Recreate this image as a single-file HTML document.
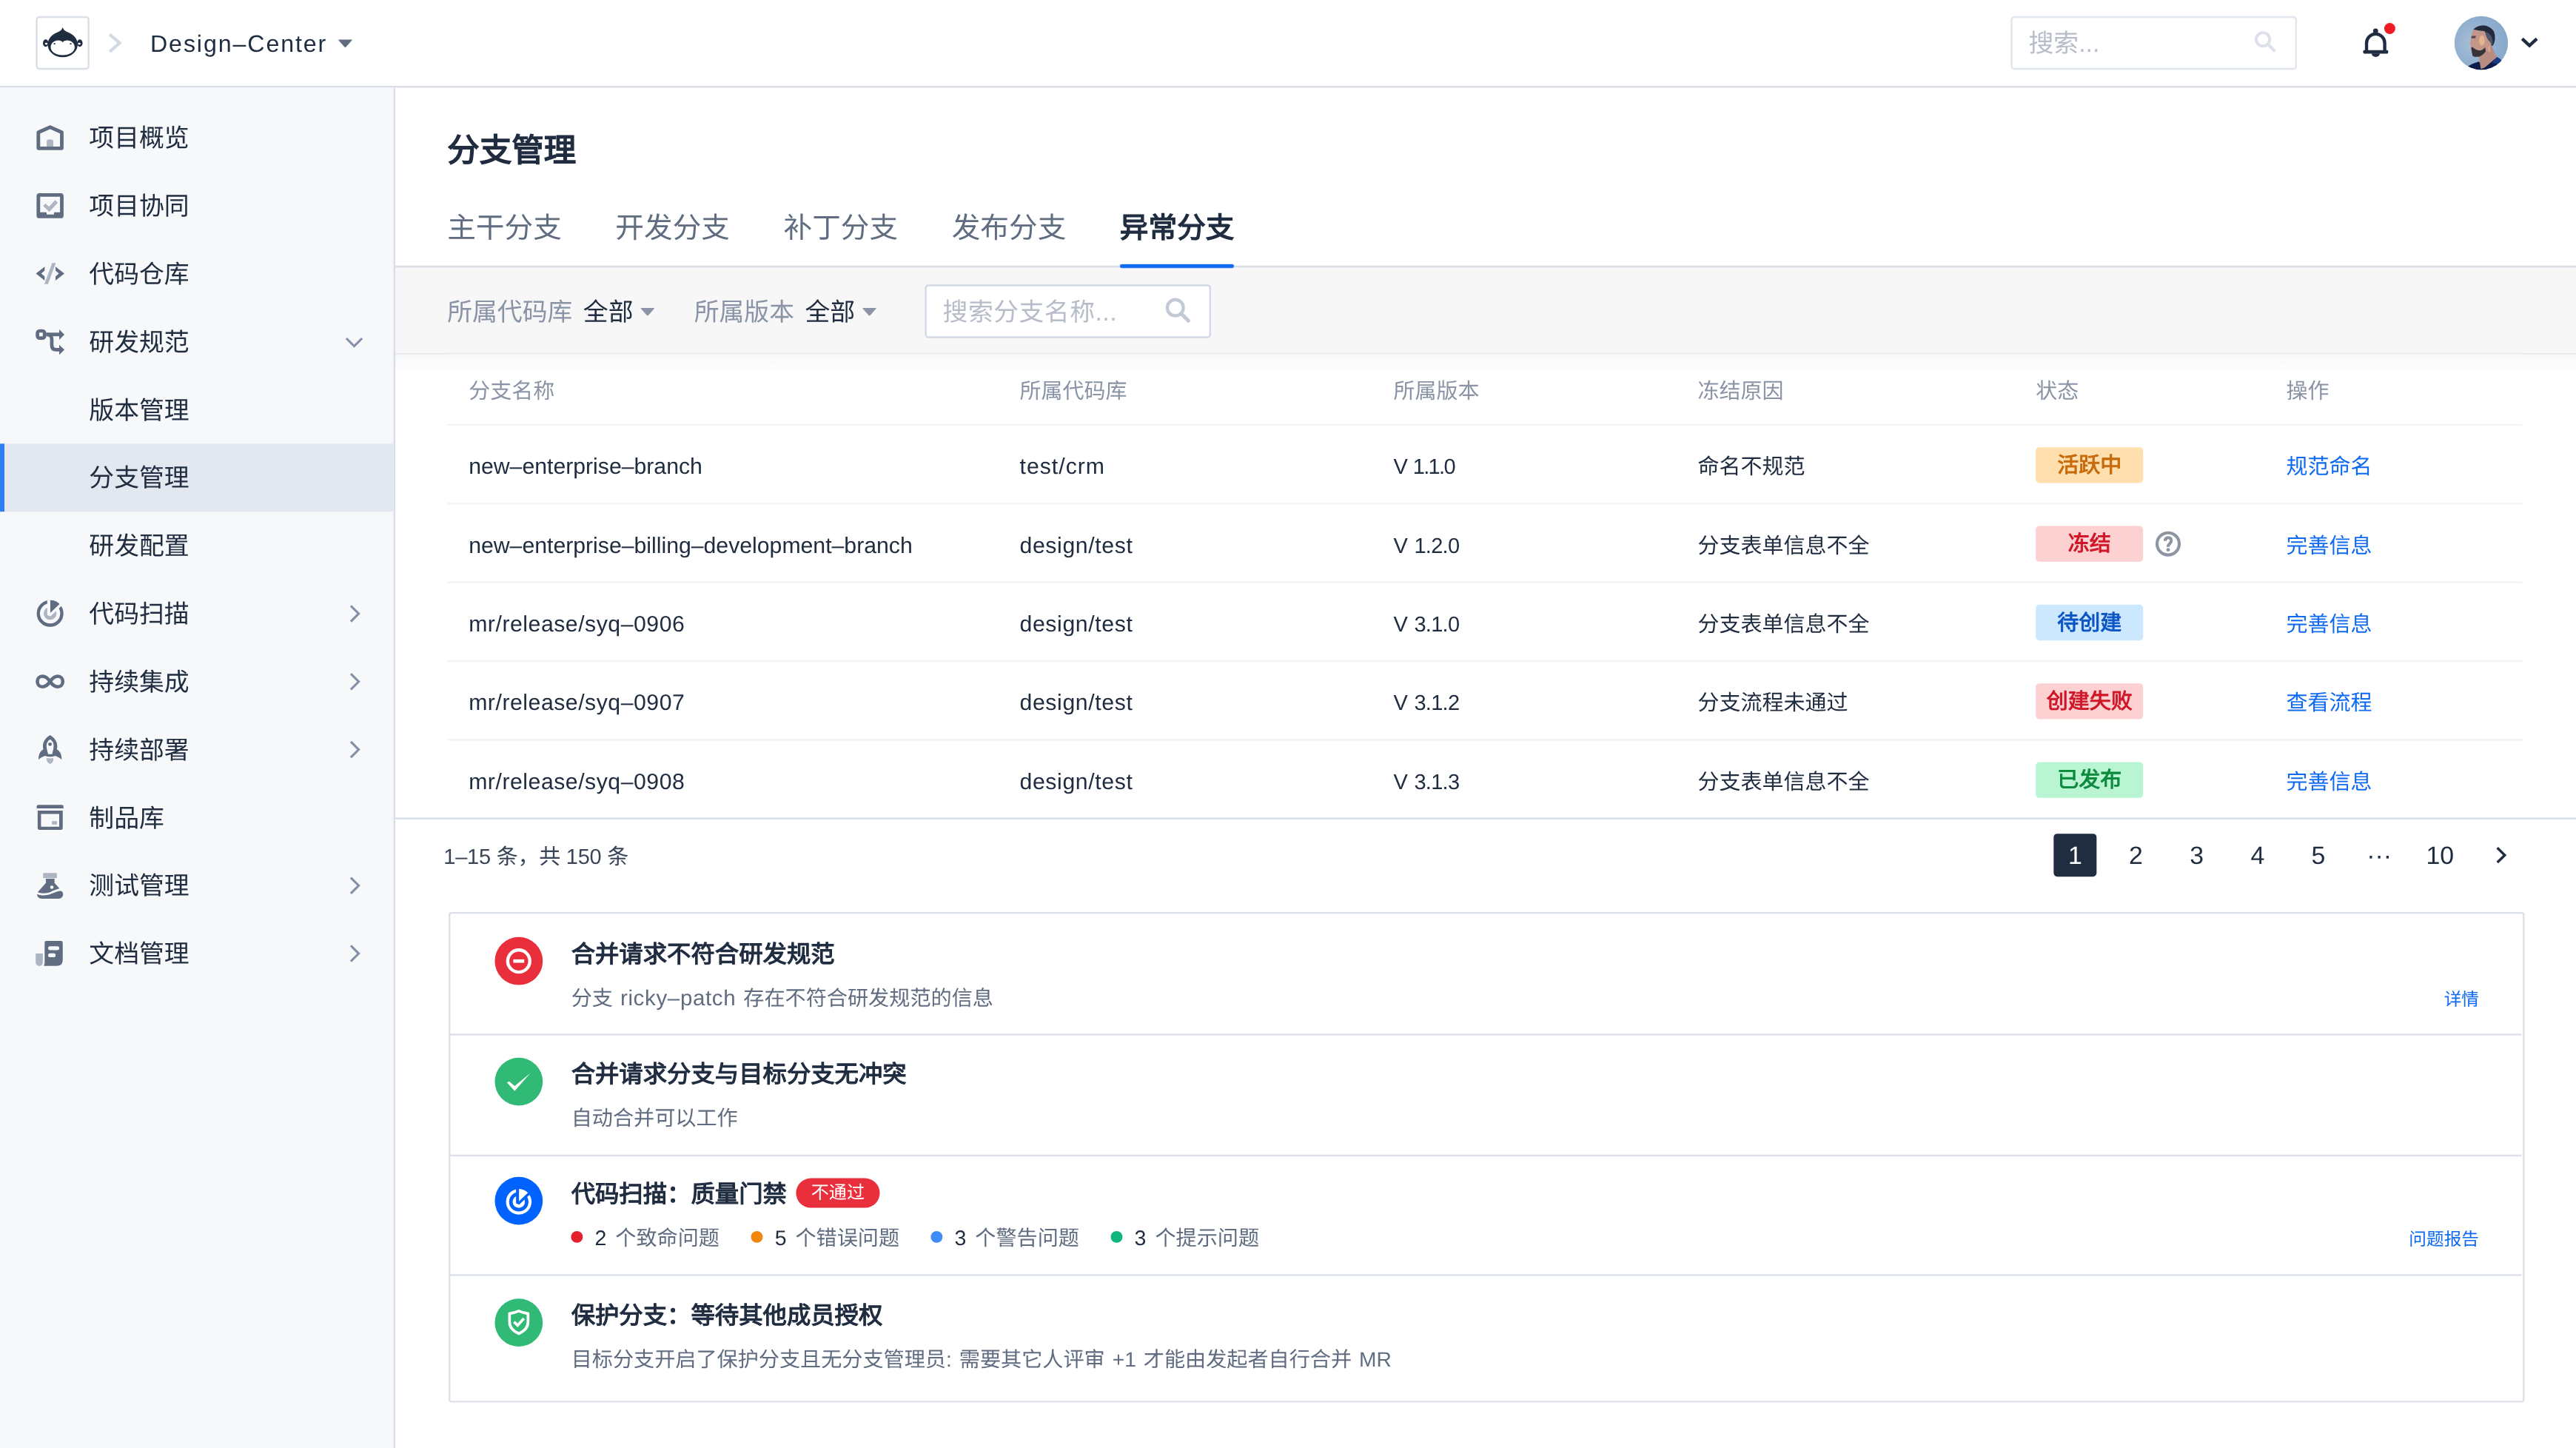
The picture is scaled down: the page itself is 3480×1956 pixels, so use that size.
<!DOCTYPE html>
<html lang="zh-CN">
<head>
<meta charset="utf-8">
<title>分支管理</title>
<style>
*{box-sizing:border-box;margin:0;padding:0}
html,body{width:3480px;height:1956px;overflow:hidden;background:#fff}
body{font-family:"Liberation Sans",sans-serif;color:#202d40;-webkit-font-smoothing:antialiased;text-rendering:geometricPrecision}
#stage{position:absolute;left:0;top:0;width:1440px;height:810px;transform:scale(2.4166667);transform-origin:0 0;overflow:hidden;will-change:transform}
.abs{position:absolute}
svg{display:block;overflow:visible}
/* header */
#hdr{position:absolute;left:0;top:0;width:1440px;height:49px;background:#fff;border-bottom:1px solid #d9dee7}
#logo{position:absolute;left:20px;top:9px;width:30px;height:30px;border:1px solid #d9dee7;border-radius:2px;background:#fff}
#proj{position:absolute;left:84px;top:0;height:48px;line-height:48px;font-size:14px;color:#202d40;white-space:nowrap}
#hsearch{position:absolute;left:1124px;top:9px;width:160px;height:30px;border:1px solid #e1e5ec;border-radius:2px;background:#fff}
#hsearch span{position:absolute;left:9px;top:0;line-height:28px;font-size:14px;color:#b7bdc8;white-space:nowrap}
/* sidebar */
#side{position:absolute;left:0;top:49px;width:221px;height:761px;background:#f7f8fa;border-right:1px solid #d9dee7;padding-top:9px}
.it{position:relative;height:38px;line-height:39.2px;font-size:14px;color:#202d40;padding-left:49.8px;white-space:nowrap}
.it svg.ic{position:absolute;left:20px;top:11px;width:16px;height:16px}
.it svg.ch{position:absolute;left:192px;top:13px;width:12px;height:12px}
.it.on{background:linear-gradient(90deg,#2f7fee 2.3px,#e3e7f0 2.3px)}

/* main */
#title{position:absolute;left:250px;top:64.15px;font-size:18px;-webkit-text-stroke:0.7px #202d40;line-height:40px;color:#202d40;white-space:nowrap}
.tab{position:absolute;top:108.75px;height:40px;line-height:40px;font-size:16px;color:#606c80;white-space:nowrap}
.tab.on{color:#202d40;-webkit-text-stroke:0.6px #202d40}
#fbar{position:absolute;left:221px;top:149px;width:1219px;height:49px;background:#f7f7f8}
#fshadow{z-index:2;position:absolute;left:221px;top:198px;width:1219px;height:10px;background:linear-gradient(rgba(32,45,64,0.035),rgba(32,45,64,0))}
.fl{position:absolute;top:150.2px;height:48px;line-height:49px;font-size:14px;white-space:nowrap}
.fl.k{color:#8a94a6}.fl.v{color:#202d40}
#fsearch{position:absolute;left:517px;top:158.5px;width:160px;height:30px;border:1px solid #d3d9e4;border-radius:2px;background:#fff}
#fsearch span{position:absolute;left:9px;top:0;line-height:29px;font-size:14px;color:#b7bdc8;white-space:nowrap;letter-spacing:0.2px}
/* table */
#tbl{position:absolute;left:250px;top:198px;width:1160px;background:#fff}
.tr{position:relative;height:44px;border-bottom:1px solid #f1f3f8}
.tr.h{height:40px;color:#8a94a6}
.tr.last{border-bottom:none}
.td{position:absolute;top:0;height:100%;font-size:12px;white-space:nowrap}
.tr .td{line-height:46px}.tr.h .td{line-height:41px;transform:translateY(0.6px)}
.c1{left:12px}.c2{left:320px}.c3{left:529px}.c4{left:699px}.c5{left:888px}.c6{left:1028px}
.c6 a,.lnk{color:#0f6af2;text-decoration:none}
.bd{position:absolute;left:888px;top:12px;width:60px;height:20px;border-radius:2px;font-size:12px;-webkit-text-stroke:0.4px;line-height:21.6px;text-align:center}
.b-or{background:#ffdfae;color:#c66a0c}.b-rd{background:#fdd0d1;color:#cf1627}.b-bl{background:#cce8fe;color:#0b55c4}.b-gr{background:#b9f5d2;color:#0c8a3e}
#tblend{position:absolute;left:221px;top:457px;width:1219px;height:1px;background:#d9dee7}
/* pagination */
#pinfo{position:absolute;left:248px;top:467px;line-height:24px;font-size:12px;color:#3a4558;white-space:nowrap}
.pg{position:absolute;top:466px;width:24px;height:24px;line-height:24.6px;text-align:center;font-size:14px;color:#202d40;border-radius:2px}
.pg.on{background:#202d40;color:#fff}

/* card */
.ct{position:absolute;left:319.3px;font-size:13.4px;-webkit-text-stroke:0.5px #202d40;line-height:20px;color:#202d40;white-space:nowrap}
.cs{position:absolute;left:319.3px;font-size:11.65px;line-height:18px;color:#606c80;white-space:nowrap}
.cl{position:absolute;font-size:9.8px;line-height:14px;color:#0f6af2;white-space:nowrap;text-align:right;right:54.2px}
.pill{position:absolute;left:445px;top:658.6px;width:46.8px;height:16.5px;color:#fff;font-size:10px;line-height:17px;text-align:center}
.num{position:absolute;top:682.6px;font-size:11.8px;line-height:18px;color:#202d40;white-space:nowrap}
.cs.q{top:684.05px}
.la{font-size:12.2px;letter-spacing:0.28px}
.cs{word-spacing:0.9px}

.tr .c1,.tr .c2,.tr .c3{font-size:12.5px}
.tr.h .c1,.tr.h .c2,.tr.h .c3{font-size:12px}
.n2,.n3,.n4{letter-spacing:0.22px}
.r0{letter-spacing:0.42px}.r1,.r2,.r3,.r4{letter-spacing:0.26px}
.tr .c3{font-size:12px;word-spacing:0.8px}.v0{letter-spacing:-0.675px}.v1,.v2,.v3,.v4{letter-spacing:-0.3px}
#proj{font-size:13.3px;letter-spacing:0.79px;top:1px}
#pinfo{letter-spacing:-0.1px}
</style>
</head>
<body>
<div id="stage">

<div id="hdr">
  <div id="logo">
    <svg width="28" height="28" viewBox="1 1 28 28">
      <ellipse cx="5.55" cy="15.1" rx="1.55" ry="2.05" fill="#202d40"/><ellipse cx="5.85" cy="15.45" rx="0.75" ry="0.6" fill="#fff"/>
      <ellipse cx="24.6" cy="15.1" rx="1.55" ry="2.05" fill="#202d40"/><ellipse cx="24.3" cy="15.45" rx="0.75" ry="0.6" fill="#fff"/>
      <path d="M15.06 6.2 C15.4 7.6 16.3 8.3 17.6 8.9 C21 10 23.4 12.6 23.4 15.9 C23.4 19.8 19.7 23 15.06 23 C10.4 23 6.7 19.8 6.7 15.9 C6.7 12.6 9.1 10 12.5 8.9 C13.8 8.3 14.7 7.6 15.06 6.2 Z" fill="#202d40"/>
      <path d="M15.06 14.6 C16.2 13.4 18 13.4 19.2 13.9 C20.9 14.6 21.75 16 21.75 17.5 C21.75 19.9 18.8 21.85 15.06 21.85 C11.3 21.85 8.35 19.9 8.35 17.5 C8.35 16 9.2 14.6 10.9 13.9 C12.1 13.4 13.9 13.4 15.06 14.6 Z" fill="#fff"/>
      <ellipse cx="10.5" cy="15.45" rx="0.58" ry="0.38" fill="#202d40"/><ellipse cx="19.5" cy="15.45" rx="0.58" ry="0.38" fill="#202d40"/>
    </svg>
  </div>
  <svg class="abs" style="left:59px;top:17px" width="12" height="14" viewBox="0 0 12 14"><path d="M2.3 2.2 L7.9 7.05 L2.3 11.9" fill="none" stroke="#d3d9e3" stroke-width="1.7"/></svg>
  <div id="proj">Design–Center</div>
  <svg class="abs" style="left:189px;top:21.6px" width="8" height="5" viewBox="0 0 8 5"><path d="M0.5 0.1 H7.5 Q8 0.1 7.7 0.5 L4.4 4.3 Q4 4.7 3.6 4.3 L0.3 0.5 Q0 0.1 0.5 0.1Z" fill="#606c80"/></svg>
  <div id="hsearch"><span>搜索...</span>
    <svg class="abs" style="left:134.9px;top:7.4px" width="12.5" height="12.5" viewBox="0 0 13 13"><circle cx="5.2" cy="5.2" r="3.9" fill="none" stroke="#dce1ea" stroke-width="1.7"/><path d="M8.2 8.2 L11.6 11.6" stroke="#dce1ea" stroke-width="1.9" stroke-linecap="round"/></svg>
  </div>
  <svg class="abs" style="left:1320px;top:16px" width="16" height="16" viewBox="0 0 16 16">
    <circle cx="7.98" cy="1.36" r="1.41" fill="#202d40"/>
    <path d="M2.91 12.6 V8.08 A5.08 5.08 0 0 1 13.07 8.08 V12.6" fill="none" stroke="#202d40" stroke-width="1.8"/>
    <rect x="1.03" y="12.04" width="13.97" height="1.93" rx="0.6" fill="#202d40"/>
    <path d="M5.74 13.9 A2.31 1.92 0 0 0 10.37 13.9 Z" fill="#202d40"/>
  </svg>
  <svg class="abs" style="left:1330px;top:10px" width="12" height="12" viewBox="0 0 12 12"><circle cx="5.9" cy="5.9" r="3.1" fill="#ee1c24"/></svg>
  <svg class="abs" style="left:1372px;top:9px" width="30" height="30" viewBox="0 0 30 30">
    <defs><radialGradient id="avg" cx="0.36" cy="0.5" r="0.62"><stop offset="0" stop-color="#a9c0d9"/><stop offset="0.55" stop-color="#94b1d0"/><stop offset="1" stop-color="#88a9cc"/></radialGradient><clipPath id="avc"><circle cx="15" cy="15" r="15"/></clipPath><filter id="avb" x="-10%" y="-10%" width="120%" height="120%"><feGaussianBlur stdDeviation="0.32"/></filter></defs>
    <g clip-path="url(#avc)">
      <rect width="30" height="30" fill="url(#avg)"/>
      <g filter="url(#avb)">
      <path d="M7.6 28 Q10.5 26.2 13.6 25.4 L17 27.5 L23.7 22.9 Q25.4 23.6 26.4 24.8 L27 32 H7 Z" fill="#0f1f48"/>
      <path d="M23.7 22.9 Q25.4 23.6 26.4 24.8 L24.5 27 L21 26 Z" fill="#173a82"/>
      <path d="M13.6 21 L20.6 15.6 Q22.4 20.6 23.8 23 L17.6 28.2 Q16 29.6 14.7 29.3 Z" fill="#b98c82"/>
      <path d="M10.7 7.6 Q9.6 9.6 9.5 11.5 L8.7 15.6 Q8.9 16.4 9.5 17 L9.3 18.2 L10.2 22 Q11.2 22.9 14 22.6 L17.6 20 L20.8 16 L19.2 11 L16.8 8 Z" fill="#c3968a"/>
      <ellipse cx="15.4" cy="13.6" rx="1.6" ry="2.8" fill="#ecbb8e" opacity="0.8"/>
      <ellipse cx="19.5" cy="18.4" rx="0.6" ry="1.9" fill="#e6b592" opacity="0.7"/>
      <path d="M9.5 11.2 L12 11 L11.8 12.3 L9.6 12.4 Z" fill="#5a464a"/>
      <path d="M9.4 17.4 Q10.4 17.2 11 18 Q12.4 19.4 14.4 19.2 Q16 19 17.2 17.4 L17.6 19.8 Q16 21.8 14 22.7 Q11.4 23 10.3 22.3 Q9.6 20.4 9.4 17.4 Z" fill="#2c2a34" opacity="0.92"/>
      <path d="M10.6 7.4 Q12.6 5.4 16.3 5.2 Q20 5.6 22 8.4 Q23 10.6 22.7 13 Q22.4 15 21.6 16.4 L20.8 16.6 Q20.6 14.6 19.3 13.8 Q18.4 12.4 17.8 11 Q17.4 9 16.8 8.4 Q13.6 8.2 10.6 7.4 Z" fill="#222a3b"/>
      <path d="M17.2 8.6 Q19.4 9.4 20.6 11.2 Q21.6 13 21.4 15.6 L20.8 16.4 Q20.6 14.6 19.3 13.8 Q18.2 12 17.8 10.6 Z" fill="#4d586c"/>
      </g>
    </g>
  </svg>
  <svg class="abs" style="left:1408px;top:19px" width="12" height="10" viewBox="0 0 12 10"><path d="M1.9 2.7 L6 6.5 L10.1 2.7" fill="none" stroke="#202d40" stroke-width="1.8"/></svg>
</div>

<div id="side">
  <div class="it"><svg class="ic" viewBox="0 0 16 16"><path d="M1.45 4.95 L8 2.05 L14.55 4.95 V13.9 H1.45 Z" fill="none" stroke="#606c80" stroke-width="2" stroke-linejoin="round"/><path d="M6.1 12.9 V10 Q6.1 9 7.1 9 H8.8 Q9.8 9 9.8 10 V12.9 Z" fill="#aeb5c2"/></svg>项目概览</div>
  <div class="it"><svg class="ic" viewBox="0 0 16 16"><rect x="1.45" y="2" width="13.1" height="12" rx="0.6" fill="none" stroke="#606c80" stroke-width="2"/><path d="M1 11.7 H5.6 Q6.07 11.7 6.07 12.2 V12.9 H10.18 V12.2 Q10.18 11.7 10.65 11.7 H15 V14.6 H1 Z" fill="#606c80"/><path d="M4.75 7.45 L7.5 10 L11.6 5.55" fill="none" stroke="#aeb5c2" stroke-width="2"/></svg>项目协同</div>
  <div class="it"><svg class="ic" viewBox="0 0 16 16"><path d="M0.07 7.9 L4.96 4.1 V6.24 L3.07 7.9 L4.96 9.5 V11.81 Z" fill="#606c80"/><path d="M16 7.9 L11.04 4.1 V6.24 L12.93 7.9 L11.04 9.5 V11.81 Z" fill="#606c80"/><path d="M9.16 1.95 H11.21 L6.84 13.84 H4.78 Z" fill="#aeb5c2"/></svg>代码仓库</div>
  <div class="it"><svg class="ic" viewBox="0 0 16 16"><rect x="0.94" y="1.96" width="3.98" height="3.98" rx="1.2" fill="none" stroke="#606c80" stroke-width="1.95"/><path d="M5.8 3.94 H13.3" stroke="#606c80" stroke-width="2"/><path d="M6.3 3.94 C8.3 3.94 8.94 5 8.94 6.6 V9.9 C8.94 11.6 9.9 12.44 11.4 12.44 H13.3" fill="none" stroke="#606c80" stroke-width="1.97"/><path d="M13.1 1.11 L16 4 L13.1 6.88 Z" fill="#606c80"/><path d="M13.1 9.74 L16 12.5 L13.1 15.31 Z" fill="#606c80"/></svg>研发规范<svg class="ch" viewBox="0 0 12 12"><path d="M1.6 4.1 L6 8.5 L10.4 4.1" fill="none" stroke="#8491a8" stroke-width="1.3"/></svg></div>
  <div class="it">版本管理</div>
  <div class="it on">分支管理</div>
  <div class="it">研发配置</div>
  <div class="it"><svg class="ic" viewBox="0 0 16 16"><g transform="translate(8 7.9)"><circle r="6.56" fill="none" stroke="#606c80" stroke-width="1.8"/><circle r="3.6" fill="#aeb5c2"/><path d="M0 0.4 L0 -7.46 A7.46 7.46 0 0 1 5.9 -4.56 Z" fill="#606c80"/><path d="M-0.74 -8.2 V0.4" stroke="#f7f8fa" stroke-width="1.71" stroke-linecap="round" fill="none"/><path d="M0.05 0.78 L6.2 -5.1" stroke="#f7f8fa" stroke-width="1.5" stroke-linecap="round" fill="none"/></g></svg>代码扫描<svg class="ch" viewBox="0 0 12 12"><path d="M4.1 1.6 L8.5 6 L4.1 10.4" fill="none" stroke="#8491a8" stroke-width="1.3"/></svg></div>
  <div class="it"><svg class="ic" viewBox="0 0 16 16"><path d="M8 7.95 C6.4 5.6 4.8 5 3.7 5 C2.1 5 0.9 6.3 0.9 7.95 C0.9 9.6 2.1 10.9 3.7 10.9 C4.8 10.9 6.4 10.3 8 7.95 C9.6 5.6 11.2 5 12.3 5 C13.9 5 15.1 6.3 15.1 7.95 C15.1 9.6 13.9 10.9 12.3 10.9 C11.2 10.9 9.6 10.3 8 7.95 Z" fill="none" stroke="#606c80" stroke-width="1.9"/></svg>持续集成<svg class="ch" viewBox="0 0 12 12"><path d="M4.1 1.6 L8.5 6 L4.1 10.4" fill="none" stroke="#8491a8" stroke-width="1.3"/></svg></div>
  <div class="it"><svg class="ic" viewBox="0 0 16 16"><path d="M8 -0.15 C10.6 1.4 12 3.6 12 6 C12 6.8 11.9 7.4 11.75 7.9 C13.6 8.9 14.5 10.8 14.47 13.5 C13.2 12.6 12.2 12 10.9 11.5 C9 12.2 7 12.2 5.1 11.5 C3.8 12 2.8 12.6 1.53 13.5 C1.5 10.8 2.4 8.9 4.25 7.9 C4.1 7.4 4 6.8 4 6 C4 3.6 5.4 1.4 8 -0.15 Z" fill="#606c80"/><path d="M8 2.25 C9.4 3.2 10 4.4 10 5.6 C10 7 9.7 8.6 9.15 10.55 H6.95 C6.3 8.6 6 7 6 5.6 C6 4.4 6.6 3.2 8 2.25 Z" fill="#f7f8fa"/><circle cx="7.97" cy="5" r="1" fill="#606c80"/><path d="M6.07 12.7 Q8 13.1 9.84 12.7 V13.6 C9.84 14.8 9 15.7 8 16.05 C7 15.7 6.07 14.8 6.07 13.6 Z" fill="#aeb5c2"/></svg>持续部署<svg class="ch" viewBox="0 0 12 12"><path d="M4.1 1.6 L8.5 6 L4.1 10.4" fill="none" stroke="#8491a8" stroke-width="1.3"/></svg></div>
  <div class="it"><svg class="ic" viewBox="0 0 16 16"><path d="M0.53 2.86 V1.8 Q0.53 0.94 1.4 0.94 H14.6 Q15.5 0.94 15.5 1.8 V2.86 Z" fill="#606c80"/><path fill-rule="evenodd" d="M1.05 4.06 H15.07 V13.9 Q15.07 14.87 14.1 14.87 H2 Q1.05 14.87 1.05 13.9 Z M2.93 5.98 V13.07 H13.1 V5.98 Z" fill="#606c80"/><rect x="9.04" y="9.98" width="2.83" height="1.92" fill="#aeb5c2"/></svg>制品库</div>
  <div class="it"><svg class="ic" viewBox="0 0 16 16"><rect x="4.1" y="0.96" width="7.71" height="2.92" rx="0.4" fill="#aeb5c2"/><path d="M5.64 4.13 H10.48 V6.53 L13.27 9.7 C11.5 10.1 10 10.8 8.4 11.5 C5.8 12.6 3 12.5 1.05 11.75 L5.64 6.53 Z" fill="#606c80"/><path d="M0.67 12.88 C2.5 13.6 5.5 13.9 8.5 12.7 C10.5 11.9 12 11.2 13.6 11 C14.8 10.9 15.3 12 15.25 13 C15.2 14.4 14.2 15.36 12.84 15.36 H3.4 C1.8 15.36 0.8 14.2 0.67 12.88 Z" fill="#606c80"/><circle cx="8.98" cy="8.97" r="0.94" fill="#f7f8fa"/></svg>测试管理<svg class="ch" viewBox="0 0 12 12"><path d="M4.1 1.6 L8.5 6 L4.1 10.4" fill="none" stroke="#8491a8" stroke-width="1.3"/></svg></div>
  <div class="it"><svg class="ic" viewBox="0 0 16 16"><path d="M5.9 0.94 H14.1 Q15.07 0.94 15.07 1.9 V11.6 Q15.07 14.92 11.7 14.92 H4.44 Q4.96 14.2 4.96 12.8 V1.9 Q4.96 0.94 5.9 0.94 Z" fill="#606c80"/><rect x="6.89" y="3.89" width="6.26" height="2.2" rx="1.1" fill="#f7f8fa"/><rect x="6.89" y="7.89" width="4.2" height="2.19" rx="1.1" fill="#f7f8fa"/><path d="M-0.07 7.97 H3.96 V12.95 A2.015 2.015 0 0 1 -0.07 12.95 Z" fill="#aeb5c2"/></svg>文档管理<svg class="ch" viewBox="0 0 12 12"><path d="M4.1 1.6 L8.5 6 L4.1 10.4" fill="none" stroke="#8491a8" stroke-width="1.3"/></svg></div>
</div>

<div id="main">
<div id="title">分支管理</div>
<div class="tab" style="left:250px">主干分支</div>
<div class="tab" style="left:344px">开发分支</div>
<div class="tab" style="left:438px">补丁分支</div>
<div class="tab" style="left:532px">发布分支</div>
<div class="tab on" style="left:626px">异常分支</div>
<div id="fbar"></div><div id="fshadow"></div>
<svg class="abs" style="left:221px;top:196px" width="1219" height="3" viewBox="0 0 1219 3"><rect x="0" y="1.5" width="1219" height="0.5" fill="#dde1e8"/></svg>
<svg class="abs" style="left:221px;top:146px" width="1219" height="5" viewBox="0 0 1219 5"><rect x="0" y="2.4" width="1219" height="1.05" fill="#d9dee7"/><rect x="405" y="1.7" width="63.8" height="2.1" rx="1" fill="#1269f3"/></svg>
<div class="fl k" style="left:250px">所属代码库</div><div class="fl v" style="left:326px">全部</div><svg class="abs" style="left:358px;top:171.9px" width="8" height="5" viewBox="0 0 8 5"><path d="M0.5 0.1 H7.5 Q8 0.1 7.7 0.5 L4.4 4.3 Q4 4.7 3.6 4.3 L0.3 0.5 Q0 0.1 0.5 0.1Z" fill="#8a94a6"/></svg>
<div class="fl k" style="left:388px">所属版本</div><div class="fl v" style="left:450px">全部</div><svg class="abs" style="left:482px;top:171.9px" width="8" height="5" viewBox="0 0 8 5"><path d="M0.5 0.1 H7.5 Q8 0.1 7.7 0.5 L4.4 4.3 Q4 4.7 3.6 4.3 L0.3 0.5 Q0 0.1 0.5 0.1Z" fill="#8a94a6"/></svg>
<div id="fsearch"><span>搜索分支名称...</span><svg class="abs" style="left:132.75px;top:6.2px" width="15" height="15" viewBox="0 0 15 15"><circle cx="6" cy="6" r="4.5" fill="none" stroke="#c3cad6" stroke-width="1.8"/><path d="M9.4 9.4 L13.3 13.3" stroke="#c3cad6" stroke-width="2.1" stroke-linecap="round"/></svg></div>
<div id="tbl">
  <div class="tr h"><div class="td c1">分支名称</div><div class="td c2">所属代码库</div><div class="td c3">所属版本</div><div class="td c4">冻结原因</div><div class="td c5">状态</div><div class="td c6">操作</div></div>
  <div class="tr"><div class="td c1 n0">new–enterprise–branch</div><div class="td c2 r0">test/crm</div><div class="td c3 v0">V 1.1.0</div><div class="td c4">命名不规范</div><div class="bd b-or">活跃中</div><div class="td c6"><a>规范命名</a></div></div>
  <div class="tr"><div class="td c1 n1">new–enterprise–billing–development–branch</div><div class="td c2 r1">design/test</div><div class="td c3 v1">V 1.2.0</div><div class="td c4">分支表单信息不全</div><div class="bd b-rd">冻结</div><svg class="abs" style="left:955px;top:15.2px" width="14" height="14" viewBox="0 0 14 14"><circle cx="7" cy="7" r="6.2" fill="none" stroke="#8d95a3" stroke-width="1.7"/><path d="M5.3 5.4 Q5.3 3.5 7 3.5 Q8.75 3.5 8.75 5.2 Q8.75 6.2 7.8 6.95 Q7 7.6 7 8.7" fill="none" stroke="#8d95a3" stroke-width="1.7"/><circle cx="7" cy="10.3" r="1" fill="#8d95a3"/></svg><div class="td c6"><a>完善信息</a></div></div>
  <div class="tr"><div class="td c1 n2">mr/release/syq–0906</div><div class="td c2 r2">design/test</div><div class="td c3 v2">V 3.1.0</div><div class="td c4">分支表单信息不全</div><div class="bd b-bl">待创建</div><div class="td c6"><a>完善信息</a></div></div>
  <div class="tr"><div class="td c1 n3">mr/release/syq–0907</div><div class="td c2 r3">design/test</div><div class="td c3 v3">V 3.1.2</div><div class="td c4">分支流程未通过</div><div class="bd b-rd">创建失败</div><div class="td c6"><a>查看流程</a></div></div>
  <div class="tr last"><div class="td c1 n4">mr/release/syq–0908</div><div class="td c2 r4">design/test</div><div class="td c3 v4">V 3.1.3</div><div class="td c4">分支表单信息不全</div><div class="bd b-gr">已发布</div><div class="td c6"><a>完善信息</a></div></div>
</div>
<div id="tblend"></div>
<div id="pinfo">1–15 条，共 150 条</div>
<div class="pg on" style="left:1148px">1</div>
<div class="pg" style="left:1182px">2</div>
<div class="pg" style="left:1216px">3</div>
<div class="pg" style="left:1250px">4</div>
<div class="pg" style="left:1284px">5</div>
<div class="pg" style="left:1318px">···</div>
<div class="pg" style="left:1352px">10</div>
<svg class="abs" style="left:1392px;top:472px" width="12" height="12" viewBox="0 0 12 12"><path d="M4 1.9 L8.2 6 L4 10.1" fill="none" stroke="#202d40" stroke-width="1.4"/></svg>
<svg class="abs" style="left:250px;top:509px" width="1162" height="276" viewBox="0 0 1162 276">
<rect x="1.25" y="1.25" width="1159.50" height="273.20" rx="1.2" fill="#fff" stroke="#dce1e9" stroke-width="1"/>
<rect x="1.5" y="68.75" width="1158.1" height="1" fill="#dce1e9"/>
<rect x="1.5" y="136.4" width="1158.1" height="1" fill="#dce1e9"/>
<rect x="1.5" y="203.2" width="1158.1" height="1" fill="#dce1e9"/>
<g transform="translate(40.0 28.2) scale(0.9571)"><circle r="14" fill="#e92f3c"/><circle r="6.45" fill="none" stroke="#fff" stroke-width="1.9"/><rect x="-3.2" y="-1" width="6.4" height="2" fill="#fff"/></g>
<g transform="translate(40.0 95.6) scale(0.9571)"><circle r="14" fill="#30ba75"/><path d="M-6.9 0.5 L-5.6 -0.2 L-2.4 2.5 L6.7 -4.9 L-2.4 5.5 Z" fill="#fff"/></g>
<g transform="translate(40.0 162.2) scale(0.9571)"><circle r="14" fill="#0062ff"/><g transform="translate(0 0.6)"><circle r="6.56" fill="none" stroke="#fff" stroke-width="1.8"/><circle r="3.6" fill="#fff"/><path d="M0 0.4 L0 -7.46 A7.46 7.46 0 0 1 5.9 -4.56 Z" fill="#fff"/><path d="M-0.74 -8.2 V0.4" stroke="#0062ff" stroke-width="1.71" stroke-linecap="round" fill="none"/><path d="M0.05 0.78 L6.2 -5.1" stroke="#0062ff" stroke-width="1.5" stroke-linecap="round" fill="none"/></g></g>
<g transform="translate(40.0 230.3) scale(0.9571)"><circle r="14" fill="#30ba75"/><path d="M-5.4 -5.3 Q-2.6 -5.6 0 -6.8 Q2.6 -5.6 5.4 -5.3 V-0.4 Q5.4 4 0 6.4 Q-5.4 4 -5.4 -0.4 Z" fill="none" stroke="#fff" stroke-width="1.6" stroke-linejoin="round"/><path d="M-2.8 -0.5 L-0.7 1.6 L3 -2.4" fill="none" stroke="#fff" stroke-width="1.6"/></g>
<rect x="195" y="149.6" width="46.8" height="16.5" rx="8.25" fill="#e92f3c"/>
<circle cx="72.5" cy="182.4" r="3.3" fill="#e3212d"/>
<circle cx="173.1" cy="182.4" r="3.3" fill="#f0860c"/>
<circle cx="273.6" cy="182.4" r="3.3" fill="#408cf6"/>
<circle cx="374.2" cy="182.4" r="3.3" fill="#10b57e"/>
</svg>
<div class="ct" style="top:523.85px">合并请求不符合研发规范</div>
<div class="cs s1" style="top:549.2px">分支 <span class="la">ricky–patch</span> 存在不符合研发规范的信息</div>
<div class="cl" style="top:553.3px">详情</div>
<div class="ct" style="top:591.25px">合并请求分支与目标分支无冲突</div>
<div class="cs" style="top:616.65px">自动合并可以工作</div>
<div class="ct" style="top:657.6px">代码扫描：质量门禁</div>
<div class="pill">不通过</div>
<div class="num" style="left:332.5px">2</div><div class="cs q" style="left:344px">个致命问题</div>
<div class="num" style="left:433.1px">5</div><div class="cs q" style="left:444.6px">个错误问题</div>
<div class="num" style="left:533.6px">3</div><div class="cs q" style="left:545.1px">个警告问题</div>
<div class="num" style="left:634.2px">3</div><div class="cs q" style="left:645.7px">个提示问题</div>
<div class="cl" style="top:686.7px">问题报告</div>
<div class="ct" style="top:725.5px">保护分支：等待其他成员授权</div>
<div class="cs s4" style="top:751.7px">目标分支开启了保护分支且无分支管理员: 需要其它人评审 +1 才能由发起者自行合并 MR</div>
</div>

</div>
</body>
</html>
